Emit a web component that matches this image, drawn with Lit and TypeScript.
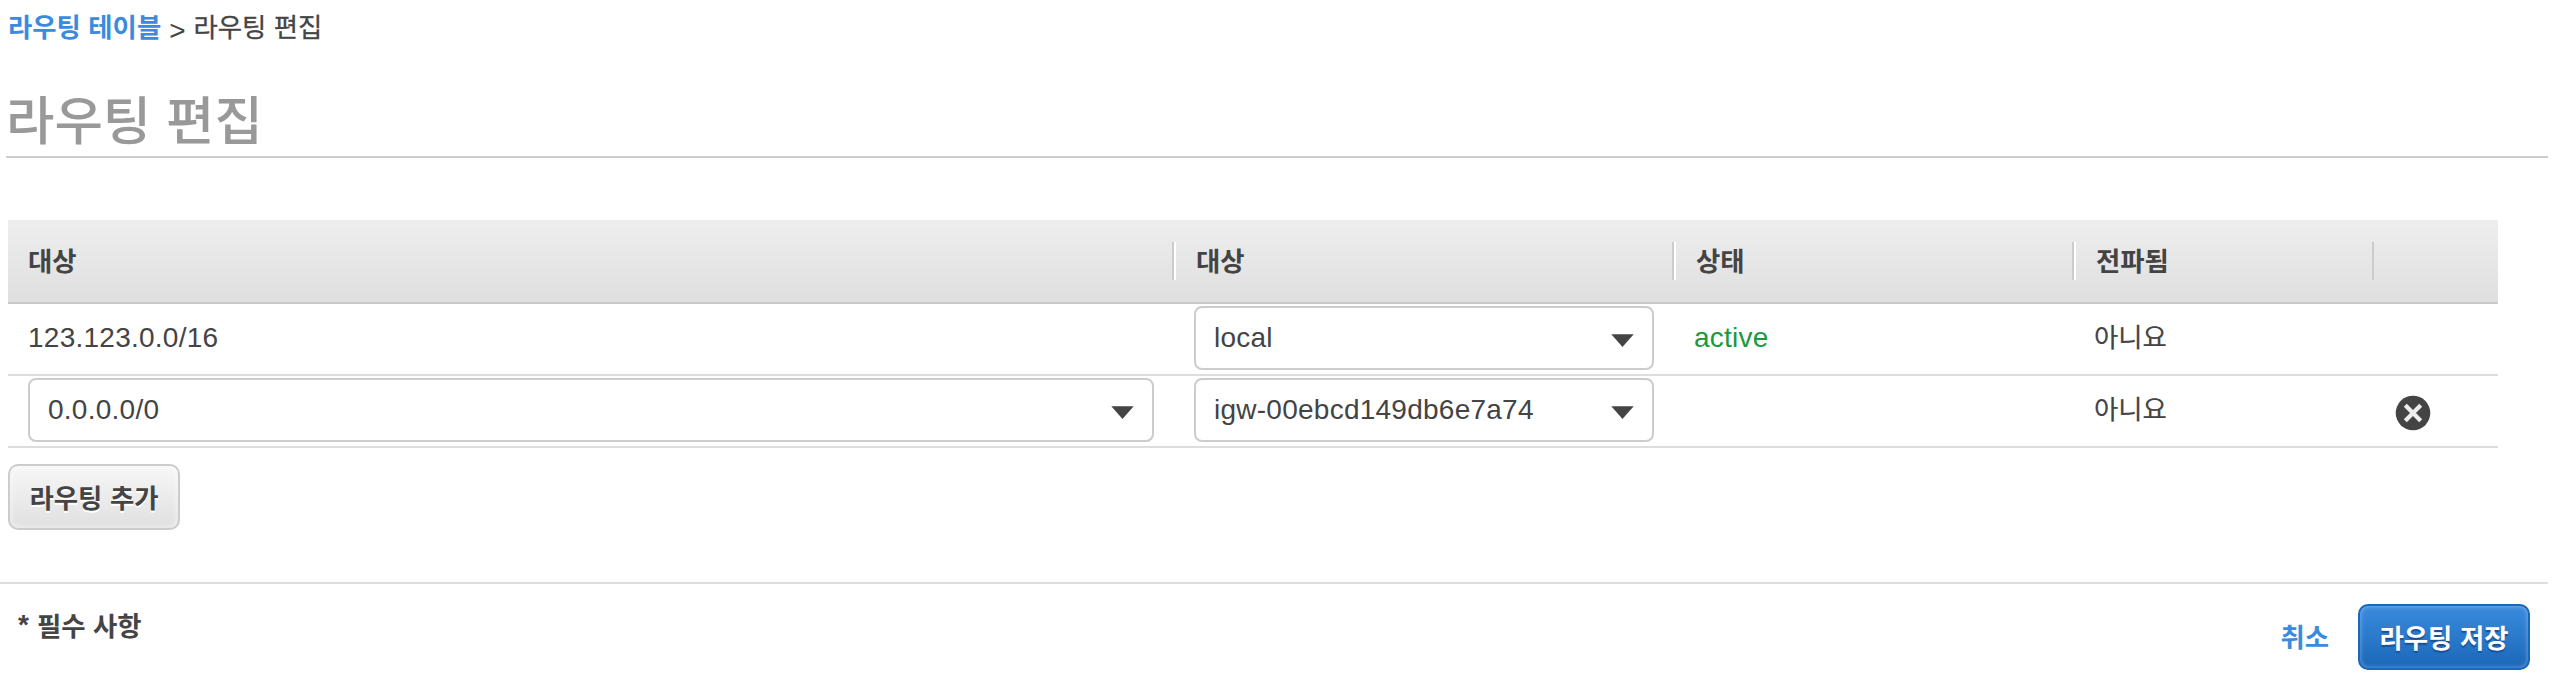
import { LitElement, html, css, svg, nothing } from "lit";
import { customElement, property } from "lit/decorators.js";

@customElement("select-box")
class SelectBox extends LitElement {
  @property() value = "";

  static styles = css`
    :host {
      display: flex;
      align-items: center;
      justify-content: space-between;
      box-sizing: border-box;
      height: 64px;
      padding: 0 18px;
      border: 2px solid #ccc;
      border-radius: 8px;
      background: #fff;
    }
    .value {
      line-height: 32px;
      white-space: nowrap;
    }
    .arrow {
      display: block;
      width: 23px;
      height: 13px;
      margin-top: 4px;
    }
  `;

  render() {
    return html`
      <span class="value">${this.value}</span>
      <svg class="arrow" viewBox="0 0 23 13">
        <path d="M0.3 0.3H22.7L11.5 13Z" fill="#444" />
      </svg>
    `;
  }
}

interface Route {
  destination: string;
  target: string;
  status: string;
  propagated: string;
  editable: boolean;
}

@customElement("app-root")
class AppRoot extends LitElement {
  private headers = ["대상", "대상", "상태", "전파됨", ""];

  private routes: Route[] = [
    { destination: "123.123.0.0/16", target: "local", status: "active", propagated: "아니요", editable: false },
    { destination: "0.0.0.0/0", target: "igw-00ebcd149db6e7a74", status: "", propagated: "아니요", editable: true },
  ];

  static styles = css`
    :host {
      display: block;
      box-sizing: border-box;
      height: 692px;
      overflow: hidden;
      background: #fff;
      color: #444;
      font: 28px/32px "Liberation Sans", Arial, "Noto Sans CJK KR", sans-serif;
    }
    .ko {
      font-family: "Noto Sans CJK KR", sans-serif;
      font-size: 26.4px;
      word-spacing: 1.5px;
    }
    .crumbs {
      display: flex;
      height: 52px;
      padding-left: 8px;
      line-height: 52px;
    }
    .crumbs .sep {
      margin: 5px 8px 0 8px;
    }
    .here {
      -webkit-text-stroke: 0.3px #444;
    }
    .link {
      color: #3a8bde;
      font-weight: 700;
      text-decoration: none;
    }
    .title {
      box-sizing: border-box;
      height: 106px;
      margin: 0 10px 0 6px;
      padding-top: 31px;
      border-bottom: 2px solid #ccc;
      color: #999;
      font-size: 52.6px;
      font-weight: 500;
      line-height: 69px;
      word-spacing: 3px;
    }
    .table {
      margin: 62px 60px 0 8px;
    }
    .row {
      display: grid;
      grid-template-columns: 1166px 500px 400px 300px 124px;
      box-sizing: border-box;
      height: 72px;
      border-bottom: 2px solid #ddd;
    }
    .head {
      height: 84px;
      border-bottom-color: #c9c9c9;
      background: linear-gradient(#eee, #dfdfdf);
      align-items: center;
      font-weight: 700;
    }
    .th {
      box-sizing: border-box;
      height: 38px;
      padding-left: 20px;
      border-right: 2px solid #ccc;
      line-height: 35px;
    }
    .th + .th {
      border-left: 2px solid #fff;
    }
    .th:last-child {
      border: 0;
    }
    .cell {
      padding: 2px 20px 0;
      line-height: 64px;
      letter-spacing: 0.25px;
    }
    .cell.ko {
      line-height: 60px;
      letter-spacing: 0;
      -webkit-text-stroke: 0.2px #444;
    }
    .active {
      color: #1a9a3c;
    }
    .remove {
      display: block;
      width: 36px;
      height: 36px;
      margin: 17px 0 0 1px;
    }
    .btn {
      box-sizing: border-box;
      width: 172px;
      height: 66px;
      padding: 0 0 1px;
      border: 2px solid #ccc;
      border-radius: 10px;
      background: linear-gradient(#f7f7f7, #e0e0e0);
      box-shadow: inset 0 0 6px rgba(255, 255, 255, 0.7);
      color: #444;
      font-weight: 700;
      line-height: 60px;
      text-align: center;
      text-shadow: 0 2px 0 #fff;
    }
    .add {
      display: block;
      margin: 16px 0 0 8px;
    }
    .footer {
      display: flex;
      box-sizing: border-box;
      height: 110px;
      margin: 52px 10px 0 0;
      padding: 20px 18px 0;
      border-top: 2px solid #ddd;
      font-weight: 700;
    }
    .required {
      display: flex;
      gap: 8px;
      flex: 1;
      line-height: 42px;
    }
    .cancel {
      margin-right: 29px;
      line-height: 64px;
    }
    .save {
      border-color: #1a68ba;
      background: linear-gradient(#3a8bde, #1b67b8);
      box-shadow: inset 0 0 5px rgba(255, 255, 255, 0.4);
      color: #fff;
      text-shadow: 0 2px 1px #1a4f96;
    }
  `;

  private removeIcon() {
    return svg`<svg class="remove" viewBox="0 0 36 36">
      <circle cx="18" cy="18" r="17.3" fill="#444" />
      <path d="M10.3 10.3L25.7 25.7M25.7 10.3L10.3 25.7" stroke="#eee" stroke-width="4.2" />
    </svg>`;
  }

  private row(r: Route) {
    return html`
      <div class="row">
        <div class="cell">
          ${r.editable ? html`<select-box .value=${r.destination}></select-box>` : r.destination}
        </div>
        <div class="cell"><select-box .value=${r.target}></select-box></div>
        <div class="cell active">${r.status}</div>
        <div class="cell ko">${r.propagated}</div>
        <div class="cell">${r.editable ? this.removeIcon() : nothing}</div>
      </div>
    `;
  }

  render() {
    return html`
      <nav class="crumbs">
        <a class="link ko">라우팅 테이블</a><span class="sep">&gt;</span><span class="here ko">라우팅 편집</span>
      </nav>
      <div class="title ko">라우팅 편집</div>
      <div class="table">
        <div class="row head">${this.headers.map((h) => html`<div class="th ko">${h}</div>`)}</div>
        ${this.routes.map((r) => this.row(r))}
      </div>
      <button class="btn add ko">라우팅 추가</button>
      <div class="footer">
        <div class="required"><span>*</span><span class="ko">필수 사항</span></div>
        <a class="link cancel ko">취소</a>
        <button class="btn save ko">라우팅 저장</button>
      </div>
    `;
  }
}
